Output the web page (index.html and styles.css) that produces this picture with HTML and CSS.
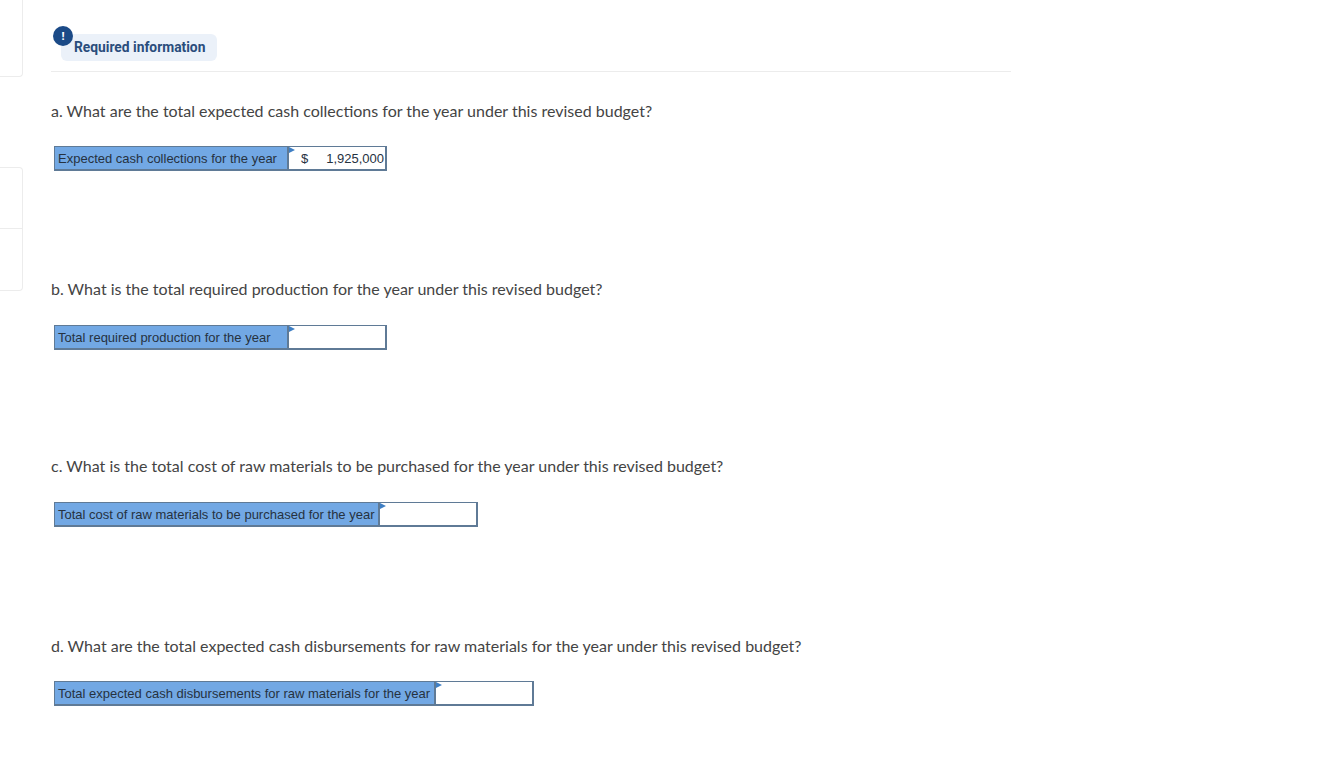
FILE: index.html
```html
<!DOCTYPE html>
<html lang="en">
<head>
  <title>Required information</title>
  <meta charset="UTF-8">
  <link rel="stylesheet" href="styles.css">
</head>
<body>
  <div class="page">
    <aside class="side">
      <div class="card card-top"></div>
      <div class="card card-split">
        <div class="card-cell"></div>
        <div class="card-cell"></div>
      </div>
    </aside>

    <main class="content">
      <header class="req">
        <span class="req-label">Required information</span>
        <span class="req-icon">!</span>
      </header>

      <section class="part part-a">
        <p class="question">a. What are the total expected cash collections for the year under this revised budget?</p>
        <div class="answer">
          <div class="answer-label label-a">Expected cash collections for the year</div>
          <div class="answer-cell cell-short"><span>$</span><span>1,925,000</span></div>
        </div>
      </section>

      <section class="part part-b">
        <p class="question">b. What is the total required production for the year under this revised budget?</p>
        <div class="answer">
          <div class="answer-label label-a">Total required production for the year</div>
          <div class="answer-cell cell-short"></div>
        </div>
      </section>

      <section class="part part-c">
        <p class="question">c. What is the total cost of raw materials to be purchased for the year under this revised budget?</p>
        <div class="answer">
          <div class="answer-label">Total cost of raw materials to be purchased for the year</div>
          <div class="answer-cell"></div>
        </div>
      </section>

      <section class="part part-d">
        <p class="question">d. What are the total expected cash disbursements for raw materials for the year under this revised budget?</p>
        <div class="answer">
          <div class="answer-label">Total expected cash disbursements for raw materials for the year</div>
          <div class="answer-cell"></div>
        </div>
      </section>
    </main>
  </div>
</body>
</html>
```
FILE: styles.css
```css
:root {
  --navy: #1b4a87;
  --line: #5f7a96;
  --blue: #72a8e4;
  --text: #444;
}

html, body {
  margin: 0;
  height: 767px;
  overflow: hidden;
  background: #fff;
}

body {
  font-family: Lato, sans-serif;
  color: var(--text);
}

.page {
  display: flex;
  align-items: flex-start;
}

.side {
  width: 23px;
  margin-right: 28px;
}

.card {
  border: 1px solid #ececec;
  border-left: none;
  box-sizing: border-box;
}

.card-top {
  height: 77px;
  border-top: none;
  border-radius: 0 0 4px 0;
}

.card-split {
  height: 124px;
  margin-top: 90px;
  border-radius: 0 4px 4px 0;
}

.card-cell {
  height: 60px;
}

.card-cell + .card-cell {
  border-top: 1px solid #ececec;
}

.content {
  width: 960px;
}

.req {
  position: relative;
  height: 71px;
  border-bottom: 1px solid #ececec;
}

.req-icon {
  position: absolute;
  left: 2px;
  top: 26px;
  width: 20px;
  height: 20px;
  border-radius: 50%;
  background: var(--navy);
  color: #fff;
  font: bold 11px/20px "Open Sans", sans-serif;
  text-align: center;
}

.req-label {
  position: absolute;
  left: 10px;
  top: 34px;
  height: 27px;
  padding: 0 12px 0 13px;
  border-radius: 6px;
  background: #ebf1f9;
  color: #2a4d7c;
  font: bold 13.8px/27px Roboto, sans-serif;
}

.part-a { margin-top: 29px; }
.part-b { margin-top: 108px; }
.part-c { margin-top: 106px; }
.part-d { margin-top: 109px; }

.question {
  margin: 0 0 25px;
  font-size: 16px;
  line-height: 20px;
}

.part-b .question,
.part-c .question {
  margin-bottom: 26px;
}

.answer {
  display: flex;
  width: max-content;
  margin-left: 3px;
  border: 2px solid var(--line);
  border-width: 1px 2px 2px 1px;
  font: 13px/24px "Liberation Sans", sans-serif;
  color: #26323f;
}

.answer-label {
  height: 22px;
  padding: 0 4px 0 3px;
  background: var(--blue);
  border-right: 2px solid var(--line);
}

.part-c .answer-label {
  padding-right: 3px;
}

.label-a {
  width: 225px;
}

.answer-cell {
  position: relative;
  width: 96px;
  height: 22px;
  background: #fff;
}

.cell-short {
  display: flex;
  justify-content: space-between;
  box-sizing: border-box;
  padding: 0 1px 0 12px;
}

.answer-cell::before {
  content: "";
  position: absolute;
  left: 0;
  top: 0;
  border-left: 6px solid #3f7fc4;
  border-top: 3px solid transparent;
  border-bottom: 3px solid transparent;
}
```
